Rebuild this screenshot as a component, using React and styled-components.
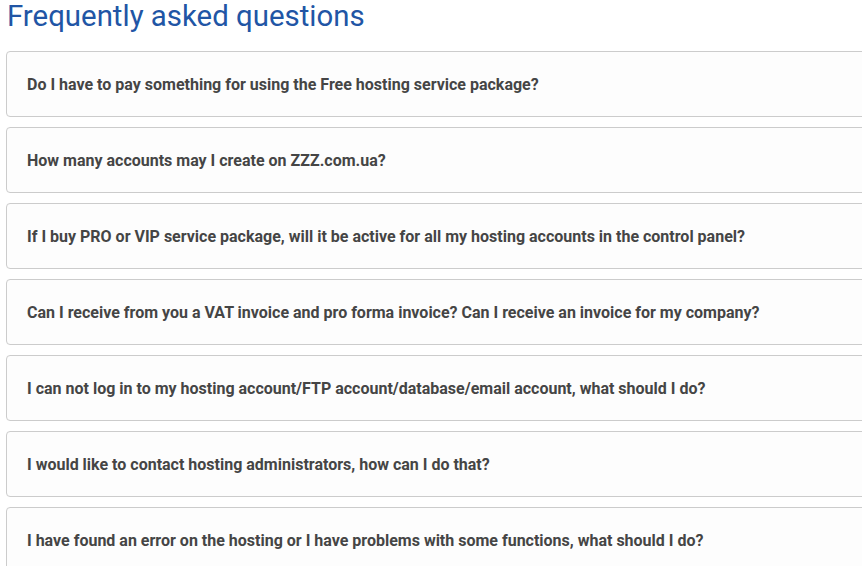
import React from "react";
import styled, { createGlobalStyle } from "styled-components";

const questions = [
  "Do I have to pay something for using the Free hosting service package?",
  "How many accounts may I create on ZZZ.com.ua?",
  "If I buy PRO or VIP service package, will it be active for all my hosting accounts in the control panel?",
  "Can I receive from you a VAT invoice and pro forma invoice? Can I receive an invoice for my company?",
  "I can not log in to my hosting account/FTP account/database/email account, what should I do?",
  "I would like to contact hosting administrators, how can I do that?",
  "I have found an error on the hosting or I have problems with some functions, what should I do?",
];

const GlobalStyle = createGlobalStyle`
  html, body {
    margin: 0;
    padding: 0;
    background: #ffffff;
    overflow: hidden;
  }
  body {
    font-family: Roboto, "Liberation Sans", sans-serif;
  }
`;

const Page = styled.div`
  width: 900px;
  padding: 0 0 0 6px;
`;

const Title = styled.h1`
  margin: 0;
  padding: 0 0 0 1px;
  font-size: 29.4px;
  font-weight: 400;
  line-height: 32px;
  color: #2155a5;
`;

const List = styled.div`
  display: flex;
  flex-direction: column;
  gap: 10px;
  margin-top: 19px;
`;

const Card = styled.div`
  display: flex;
  align-items: center;
  height: 64px;
  padding: 0 20px;
  background: #fdfdfd;
  border: 1px solid #cccccc;
  border-radius: 4px;
`;

const Question = styled.span`
  font-size: 16px;
  font-weight: 700;
  color: #454545;
`;

export default function App() {
  return (
    <>
      <GlobalStyle />
      <Page>
        <Title>Frequently asked questions</Title>
        <List>
          {questions.map((q) => (
            <Card key={q}>
              <Question>{q}</Question>
            </Card>
          ))}
        </List>
      </Page>
    </>
  );
}
